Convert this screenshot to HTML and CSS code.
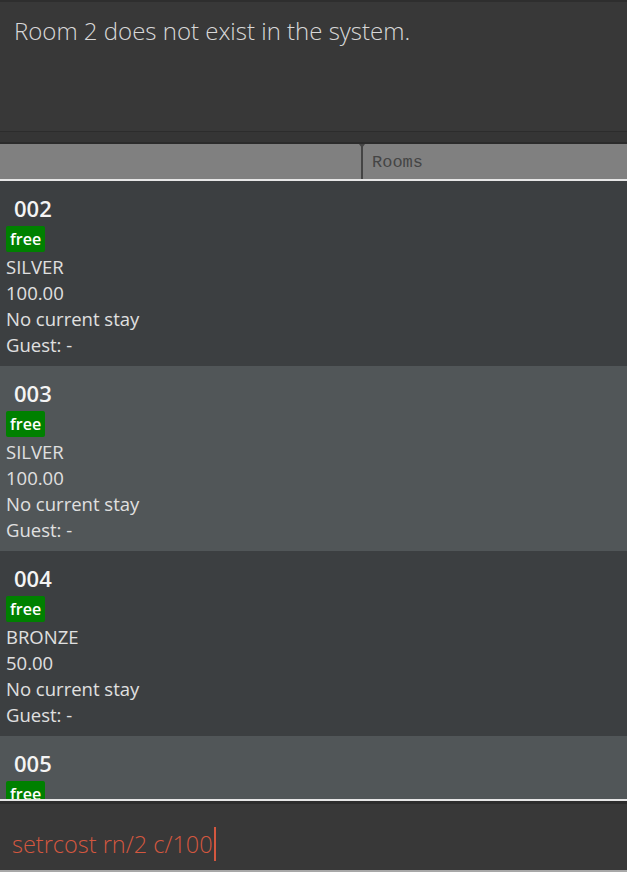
FILE: index.html
```html
<!DOCTYPE html>
<html>
<head>
<meta charset="utf-8">
<link rel="stylesheet" href="styles.css">
</head>
<body>
<div class="app">
  <div class="result-pane">
    <div class="result-text">Room 2 does not exist in the system.</div>
  </div>
  <div class="gap-band"></div>
  <div class="tabs">
    <div class="tab-empty"></div>
    <div class="tab"><span class="tab-label">Rooms</span></div>
  </div>
  <div class="list">
    <div class="card">
      <div class="room-no">002</div>
      <div class="badge-row"><span class="badge">free</span></div>
      <div class="line">SILVER</div>
      <div class="line">100.00</div>
      <div class="line">No current stay</div>
      <div class="line">Guest: -</div>
    </div>
    <div class="card alt">
      <div class="room-no">003</div>
      <div class="badge-row"><span class="badge">free</span></div>
      <div class="line">SILVER</div>
      <div class="line">100.00</div>
      <div class="line">No current stay</div>
      <div class="line">Guest: -</div>
    </div>
    <div class="card">
      <div class="room-no">004</div>
      <div class="badge-row"><span class="badge">free</span></div>
      <div class="line">BRONZE</div>
      <div class="line">50.00</div>
      <div class="line">No current stay</div>
      <div class="line">Guest: -</div>
    </div>
    <div class="card alt">
      <div class="room-no">005</div>
      <div class="badge-row"><span class="badge">free</span></div>
      <div class="line">BRONZE</div>
      <div class="line">50.00</div>
      <div class="line">No current stay</div>
      <div class="line">Guest: -</div>
    </div>
  </div>
  <div class="command">
    <span class="command-text">setrcost rn/2 c/100</span><span class="caret"></span>
  </div>
</div>
</body>
</html>
```
FILE: styles.css
```css
* { box-sizing: border-box; }
html, body { margin: 0; padding: 0; background: #383838; }
body { width: 627px; height: 872px; overflow: hidden; font-family: "Open Sans", "Noto Sans", sans-serif; }
.app { display: flex; flex-direction: column; height: 872px; }

.result-pane {
  height: 132px;
  border-top: 2px solid #2e2e2e;
  border-bottom: 1px solid #2c2c2c;
  background: #383838;
  padding: 13px 14px 0 14px;
}
.result-text {
  color: #d8d8d8;
  font-size: 24px;
  font-weight: 300;
  line-height: 32px;
}
.gap-band {
  height: 12px;
  background: #353535;
  border-bottom: 2px solid #2b2b2b;
}
.tabs {
  height: 35px;
  background: #808080;
  display: flex;
}
.tab-empty { width: 361px; }
.tab {
  flex: 1;
  border-left: 2px solid #444;
  position: relative;
  padding-left: 9px;
  display: flex;
  align-items: center;
}
.tab::before {
  content: "";
  position: absolute;
  left: -4px;
  top: 0;
  border-left: 3px solid transparent;
  border-right: 3px solid transparent;
  border-top: 4px solid #444;
}
.tab-label {
  font-family: "Liberation Mono", monospace;
  font-size: 17px;
  color: #454545;
  padding-top: 2px;
}
.list {
  height: 622px;
  overflow: hidden;
  border-top: 2px solid #e6e6e6;
  border-bottom: 2px solid #e6e6e6;
  background: #3c3f41;
}
.card {
  height: 185px;
  background: #3c3f41;
  padding: 12px 6px 0 6px;
  color: #e6e6e6;
}
.card.alt { background: #515658; }
.room-no {
  font-size: 22px;
  font-weight: 600;
  color: #f4f4f4;
  padding-left: 8px;
  line-height: 30px;
}
.badge-row { height: 31px; display: flex; align-items: center; }
.badge {
  background: #008000;
  color: #fff;
  font-size: 16px;
  font-weight: 600;
  padding: 0 4px;
  border-radius: 2px;
  line-height: 26px;
  height: 26px;
}
.line {
  font-size: 18.5px;
  line-height: 26px;
  color: #e0e0e0;
}
.command {
  flex: 1;
  background: #383838;
  border-top: 3px solid #2c2c2c;
  border-bottom: 2px solid #a8a8a8;
  padding: 14px 12px 0 12px;
  display: flex;
  align-items: center;
}
.command-text {
  color: #d4573f;
  font-size: 23.5px;
  font-weight: 300;
}
.caret {
  width: 2px;
  height: 34px;
  background: #d4573f;
  margin-left: 1px;
}
```
